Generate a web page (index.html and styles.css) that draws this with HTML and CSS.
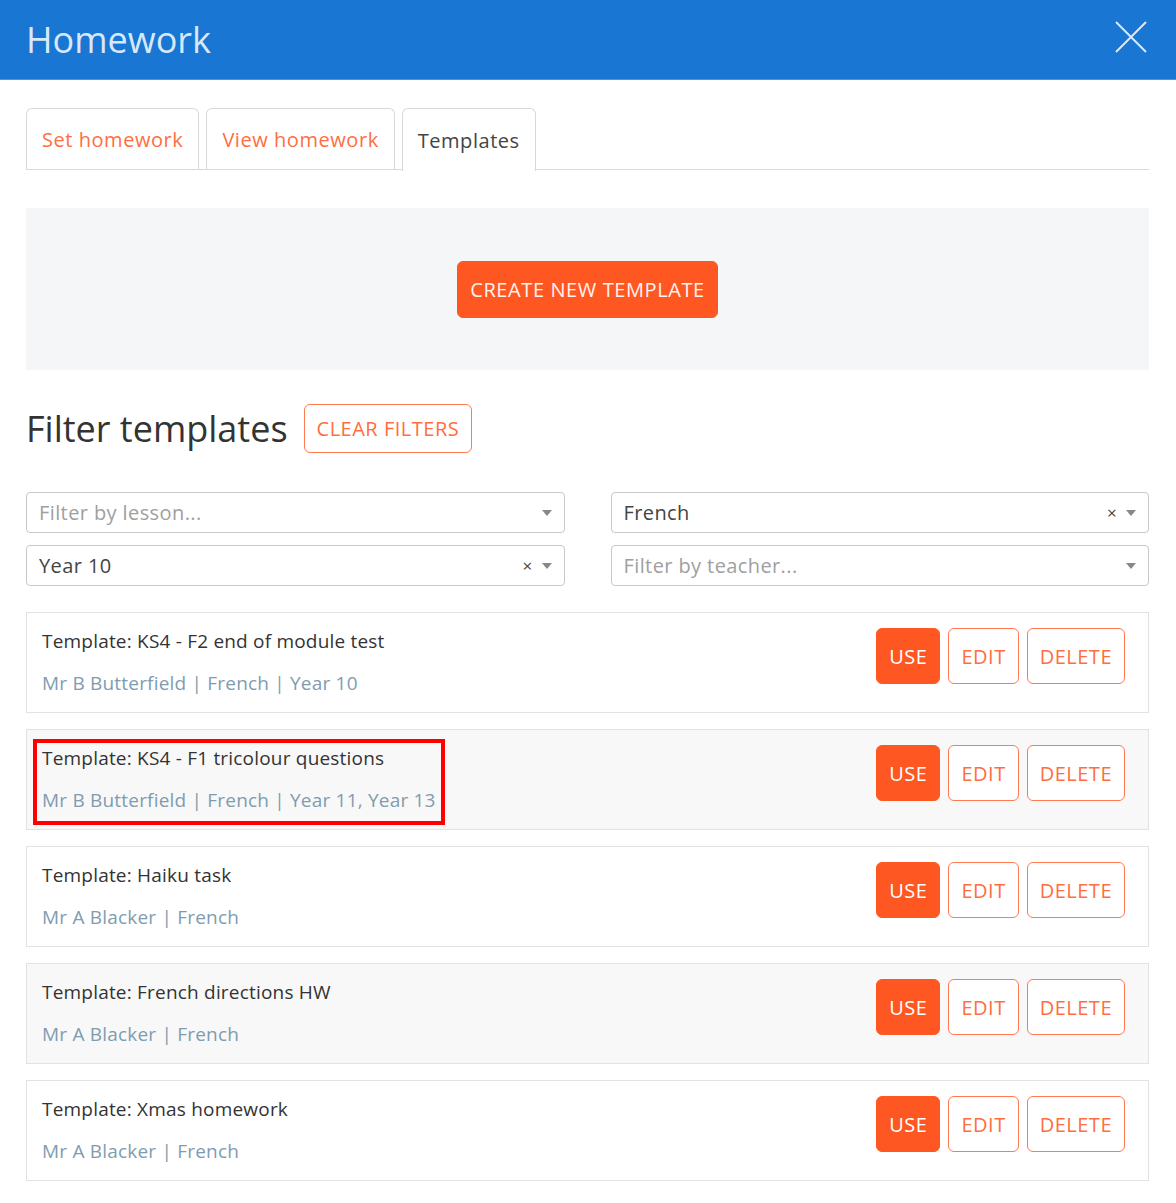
FILE: index.html
```html
<!DOCTYPE html>
<html lang="en">
<head>
  <meta charset="UTF-8">
  <meta name="viewport" content="width=device-width, initial-scale=1.0">
  <title>Homework - Templates</title>
  <link rel="stylesheet" href="styles.css">
</head>
<body>

<!-- Header -->
<div class="header">
  <h1>Homework</h1>
  <a href="#" class="close" aria-label="Close">
    <svg width="32" height="32" viewBox="0 0 32 32">
      <path d="M1 1 L31 31 M31 1 L1 31" stroke="#dbe9f8" stroke-width="2" fill="none"/>
    </svg>
  </a>
</div>

<div class="content">

  <!-- Tabs -->
  <div class="tabs">
    <a href="#" class="tab">Set homework</a>
    <a href="#" class="tab">View homework</a>
    <a href="#" class="tab active">Templates</a>
  </div>

  <!-- Create panel -->
  <div class="create-panel">
    <a href="#" class="btn btn-solid btn-create">CREATE NEW TEMPLATE</a>
  </div>

  <!-- Filters -->
  <div class="filter-head">
    <h2>Filter templates</h2>
    <a href="#" class="btn btn-outline btn-clear">CLEAR FILTERS</a>
  </div>

  <div class="filters">
    <div class="select placeholder"><span class="value">Filter by lesson...</span><span class="arrow"></span></div>
    <div class="select"><span class="value">French</span><span class="clear">×</span><span class="arrow"></span></div>
    <div class="select"><span class="value">Year 10</span><span class="clear">×</span><span class="arrow"></span></div>
    <div class="select placeholder"><span class="value">Filter by teacher...</span><span class="arrow"></span></div>
  </div>

  <!-- Template list -->
  <div class="templates">
    <div class="template">
      <div class="info">
        <div class="title">Template: KS4 - F2 end of module test</div>
        <div class="meta">Mr B Butterfield | French | Year 10</div>
      </div>
      <div class="actions">
        <a href="#" class="btn btn-solid">USE</a>
        <a href="#" class="btn btn-outline">EDIT</a>
        <a href="#" class="btn btn-outline">DELETE</a>
      </div>
    </div>

    <div class="template">
      <div class="info highlight">
        <div class="title">Template: KS4 - F1 tricolour questions</div>
        <div class="meta">Mr B Butterfield | French | Year 11, Year 13</div>
      </div>
      <div class="actions">
        <a href="#" class="btn btn-solid">USE</a>
        <a href="#" class="btn btn-outline">EDIT</a>
        <a href="#" class="btn btn-outline">DELETE</a>
      </div>
    </div>

    <div class="template">
      <div class="info">
        <div class="title">Template: Haiku task</div>
        <div class="meta">Mr A Blacker | French</div>
      </div>
      <div class="actions">
        <a href="#" class="btn btn-solid">USE</a>
        <a href="#" class="btn btn-outline">EDIT</a>
        <a href="#" class="btn btn-outline">DELETE</a>
      </div>
    </div>

    <div class="template">
      <div class="info">
        <div class="title">Template: French directions HW</div>
        <div class="meta">Mr A Blacker | French</div>
      </div>
      <div class="actions">
        <a href="#" class="btn btn-solid">USE</a>
        <a href="#" class="btn btn-outline">EDIT</a>
        <a href="#" class="btn btn-outline">DELETE</a>
      </div>
    </div>

    <div class="template">
      <div class="info">
        <div class="title">Template: Xmas homework</div>
        <div class="meta">Mr A Blacker | French</div>
      </div>
      <div class="actions">
        <a href="#" class="btn btn-solid">USE</a>
        <a href="#" class="btn btn-outline">EDIT</a>
        <a href="#" class="btn btn-outline">DELETE</a>
      </div>
    </div>
  </div>

</div>

</body>
</html>
```

FILE: styles.css
```css
/* General */
* {
  box-sizing: border-box;
}
body {
  margin: 0;
  font-family: "Open Sans", "Noto Sans", sans-serif;
  color: #333;
  background: #fff;
}
a {
  text-decoration: none;
}

/* Header */
.header {
  height: 80px;
  background-color: #1976d2;
  border-bottom: 1px solid #4a94de;
  display: flex;
  align-items: center;
  justify-content: space-between;
  padding: 0 29px 0 26px;
}
.header h1 {
  margin: 0;
  font-size: 36px;
  font-weight: 400;
  color: #d6e8fa;
}
.close {
  display: flex;
  margin-top: -6px;
}

/* Page content */
.content {
  padding: 28px 27px 20px 26px;
}

/* Tabs */
.tabs {
  display: flex;
  gap: 7px;
  border-bottom: 1px solid #d9d9d9;
  height: 62px;
}
.tab {
  display: flex;
  align-items: center;
  padding: 0 15px;
  height: 62px;
  border: 1px solid #d9d9d9;
  border-bottom: none;
  border-radius: 6px 6px 0 0;
  font-size: 20px;
  color: #ff6e40;
  letter-spacing: 0.55px;
}
.tab.active {
  color: #444;
  height: 63px;
  background: #fff;
}

/* Create panel */
.create-panel {
  margin-top: 38px;
  height: 162px;
  background: #f5f6f8;
  display: flex;
  align-items: center;
  justify-content: center;
}

/* Buttons */
.btn {
  display: inline-flex;
  align-items: center;
  justify-content: center;
  border-radius: 6px;
  font-size: 20px;
  letter-spacing: 0.5px;
  padding: 0 13px;
  height: 56px;
}
.btn-solid {
  background: #ff5722;
  color: #fff;
  border: 1px solid #ff5722;
}
.btn-outline {
  background: #fff;
  color: #ff6e40;
  border: 1px solid #ff7a50;
}
.btn-create {
  height: 57px;
  padding: 0 12px;
  letter-spacing: 0.6px;
  color: #fff3ef;
}
.btn-clear {
  height: 49px;
  padding: 0 12px;
}

/* Filters */
.filter-head {
  display: flex;
  align-items: center;
  gap: 16px;
  margin-top: 34px;
}
.filter-head h2 {
  margin: 0;
  font-size: 36px;
  font-weight: 400;
  color: #333;
}
.filters {
  display: grid;
  grid-template-columns: 1fr 1fr;
  column-gap: 46px;
  row-gap: 12px;
  margin-top: 39px;
}
.select {
  height: 41px;
  border: 1px solid #c8c8c8;
  border-radius: 4px;
  display: flex;
  align-items: center;
  padding: 0 12px 0 12px;
  font-size: 20px;
  color: #444;
  letter-spacing: 0.4px;
}
.select .value {
  flex: 1;
}
.select.placeholder {
  color: #a0a0a0;
}
.select .clear {
  font-size: 17px;
  color: #444;
  margin-right: 9px;
}
.select .arrow {
  width: 0;
  height: 0;
  border-left: 5px solid transparent;
  border-right: 5px solid transparent;
  border-top: 6px solid #888;
}

/* Template list */
.templates {
  margin-top: 26px;
  display: flex;
  flex-direction: column;
  gap: 16px;
}
.template {
  display: flex;
  justify-content: space-between;
  align-items: flex-start;
  border: 1px solid #e2e2e2;
  padding: 15px 23px 16px 15px;
  background: #fff;
}
.template:nth-child(even) {
  background: #f8f8f8;
}
.title {
  font-size: 19px;
  line-height: 26px;
  color: #333;
  letter-spacing: 0.2px;
}
.meta {
  margin-top: 16px;
  font-size: 19px;
  line-height: 26px;
  color: #7f9caf;
  letter-spacing: 0.2px;
}
.actions {
  display: flex;
  gap: 8px;
}
.actions .btn {
  padding: 0 12px;
}

/* Red annotation box */
.highlight {
  border: 4px solid #ff0000;
  margin: -6px -9px -12px -9px;
  padding: 2px 5px 8px 5px;
}
```
